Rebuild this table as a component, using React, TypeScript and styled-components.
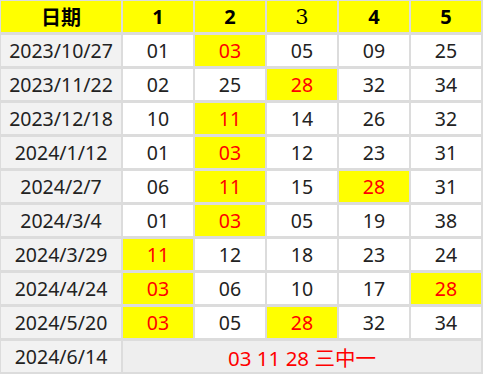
import React from "react";
import styled, { createGlobalStyle } from "styled-components";

const Global = createGlobalStyle`
  html, body { margin: 0; padding: 0; background: #ffffff; }
`;

const Table = styled.div`
  display: grid;
  grid-template-columns: 120px repeat(5, 70px);
  grid-auto-rows: 31px;
  column-gap: 2px;
  row-gap: 3px;
  padding: 1px 2px 2px 1px;
  width: 483px;
  box-sizing: border-box;
  background: #dcdcdc;
  font-family: "Noto Sans", "Noto Sans CJK SC", sans-serif;
`;

const Head = styled.div<{ $serif?: boolean }>`
  display: flex;
  align-items: center;
  justify-content: center;
  background: #ffff00;
  color: #000;
  font-size: ${(p) => (p.$serif ? "21px" : "20px")};
  font-weight: ${(p) => (p.$serif ? 400 : 700)};
  font-family: ${(p) =>
    p.$serif ? '"DejaVu Serif", "Liberation Serif", serif' : '"Noto Sans", "Noto Sans CJK SC", sans-serif'};
`;

const DateCell = styled.div`
  display: flex;
  align-items: center;
  justify-content: center;
  background: #f2f2f2;
  color: #222;
  font-size: 19.5px;
`;

const Num = styled.div<{ $hit?: boolean }>`
  display: flex;
  align-items: center;
  justify-content: center;
  background: ${(p) => (p.$hit ? "#ffff00" : "#ffffff")};
  color: ${(p) => (p.$hit ? "#ff0000" : "#222")};
  font-size: 19.5px;
`;

const Summary = styled.div`
  grid-column: span 5;
  display: flex;
  align-items: center;
  justify-content: center;
  background: #eeeeee;
  color: #ff0000;
  font-size: 20.5px;
`;

type Row = { date: string; nums: [string, boolean][] };

const rows: Row[] = [
  { date: "2023/10/27", nums: [["01", false], ["03", true], ["05", false], ["09", false], ["25", false]] },
  { date: "2023/11/22", nums: [["02", false], ["25", false], ["28", true], ["32", false], ["34", false]] },
  { date: "2023/12/18", nums: [["10", false], ["11", true], ["14", false], ["26", false], ["32", false]] },
  { date: "2024/1/12", nums: [["01", false], ["03", true], ["12", false], ["23", false], ["31", false]] },
  { date: "2024/2/7", nums: [["06", false], ["11", true], ["15", false], ["28", true], ["31", false]] },
  { date: "2024/3/4", nums: [["01", false], ["03", true], ["05", false], ["19", false], ["38", false]] },
  { date: "2024/3/29", nums: [["11", true], ["12", false], ["18", false], ["23", false], ["24", false]] },
  { date: "2024/4/24", nums: [["03", true], ["06", false], ["10", false], ["17", false], ["28", true]] },
  { date: "2024/5/20", nums: [["03", true], ["05", false], ["28", true], ["32", false], ["34", false]] },
];

export default function App() {
  return (
    <>
      <Global />
      <Table>
        <Head>日期</Head>
        <Head>1</Head>
        <Head>2</Head>
        <Head $serif>3</Head>
        <Head>4</Head>
        <Head>5</Head>
        {rows.map((r) => (
          <React.Fragment key={r.date}>
            <DateCell>{r.date}</DateCell>
            {r.nums.map(([n, hit], i) => (
              <Num key={i} $hit={hit}>
                {n}
              </Num>
            ))}
          </React.Fragment>
        ))}
        <DateCell>2024/6/14</DateCell>
        <Summary>03 11 28 三中一</Summary>
      </Table>
    </>
  );
}
